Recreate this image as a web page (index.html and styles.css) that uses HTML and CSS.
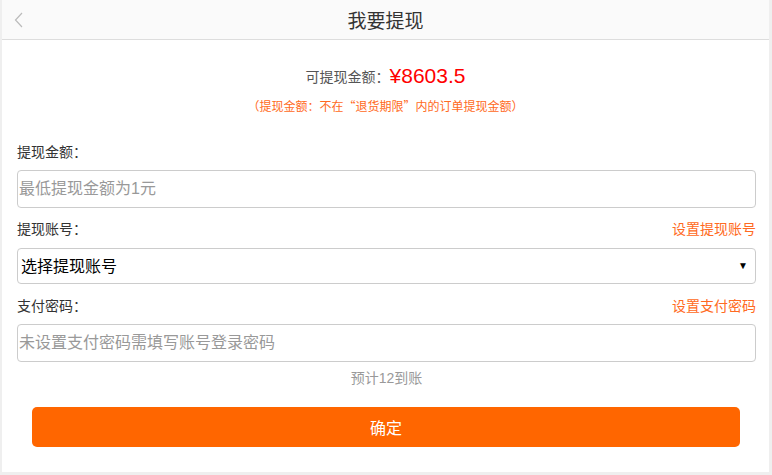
FILE: index.html
```html
<!DOCTYPE html>
<html lang="zh-CN">
<head>
  <meta charset="UTF-8">
  <title>我要提现</title>
  <meta name="viewport" content="width=device-width, initial-scale=1.0">
  <link rel="stylesheet" href="styles.css">
</head>
<body>
  <div class="page">
    <header class="top-bar">
      <a class="back" href="#" aria-label="返回">
        <svg width="10" height="16" viewBox="0 0 10 16"><path d="M8 1 L1.5 8 L8 15" fill="none" stroke="#bbb" stroke-width="1.2"/></svg>
      </a>
      <h1>我要提现</h1>
      <span></span>
    </header>

    <div class="summary">
      <p class="balance">可提现金额<span class="colon">：</span><span class="amount">¥8603.5</span></p>
      <p class="note">（提现金额：不在“退货期限”内的订单提现金额）</p>
    </div>

    <form class="withdraw" autocomplete="off">
      <div class="row"><label for="amount">提现金额<span class="colon">：</span></label></div>
      <input type="text" id="amount" class="field" placeholder="最低提现金额为1元">

      <div class="row"><label for="account">提现账号<span class="colon">：</span></label><a href="#" class="link">设置提现账号</a></div>
      <div class="select-wrap">
        <select id="account" class="field select">
          <option>选择提现账号</option>
        </select>
        <span class="arrow">▼</span>
      </div>

      <div class="row"><label for="pwd">支付密码<span class="colon">：</span></label><a href="#" class="link">设置支付密码</a></div>
      <input type="password" id="pwd" class="field" placeholder="未设置支付密码需填写账号登录密码">

      <p class="hint">预计12到账</p>
      <button type="submit" class="submit-btn">确定</button>
    </form>
  </div>
</body>
</html>
```

FILE: styles.css
```css
body { margin:0; background:#efefef; font-family:"Liberation Sans", "Noto Sans CJK SC", sans-serif; color:#333; }
.page { margin:0 3px 0 2px; height:472px; background:#fff; }

/* Nagłówek */
.top-bar { height:39px; border-bottom:1px solid #ddd; background:#fafafa; display:grid; grid-template-columns:40px 1fr 40px; align-items:center; }
.back { display:flex; align-items:center; padding-left:12px; height:100%; }
.top-bar h1 { margin:0; font-size:19px; font-weight:normal; text-align:center; color:#333; }

/* Kwota */
.summary { padding-top:24px; text-align:center; }
.balance { margin:0; height:24px; line-height:24px; font-size:14px; color:#555; font-family:"Noto Sans CJK SC", sans-serif; }
.amount { font:21px "Liberation Sans", sans-serif; color:#f00; vertical-align:top; }
.note { margin:8px 0 0; line-height:20px; font-size:12px; color:#ff6a22; font-family:"Noto Sans CJK SC", sans-serif; }
.colon { font-family:"Noto Sans CJK TC", sans-serif; }

/* Formularz */
.withdraw { padding:25px 13px 0 15px; display:flex; flex-direction:column; }
.row { display:flex; justify-content:space-between; line-height:20px; height:20px; font-size:14px; font-family:"Noto Sans CJK SC", sans-serif; }
.row + .field { margin-top:9px; }
.row + .select-wrap { margin-top:10px; }
.link { color:#ff6a22; text-decoration:none; }
.field { box-sizing:border-box; width:100%; height:38px; margin:0 0 10px; padding:0 0 0 1px; border:1px solid #ccc; border-radius:4px; font:16px "Liberation Sans", "Noto Sans CJK SC", sans-serif; color:#333; background:#fff; outline:none; }
.field::placeholder { color:#999; }
.select-wrap { position:relative; margin-bottom:11px; }
.select { appearance:none; -webkit-appearance:none; height:36px; margin:0; padding-left:3px; color:#000; }
.arrow { position:absolute; right:8px; top:10px; font-size:10px; line-height:16px; color:#000; }

.hint { margin:-4px 0 0; line-height:20px; font-size:14px; color:#999; text-align:center; }
.submit-btn { margin:19px 16px 0 15px; height:40px; border:none; border-radius:5px; background:#f60; color:#fff; font:16px "Liberation Sans", "Noto Sans CJK SC", sans-serif; cursor:pointer; }
```
